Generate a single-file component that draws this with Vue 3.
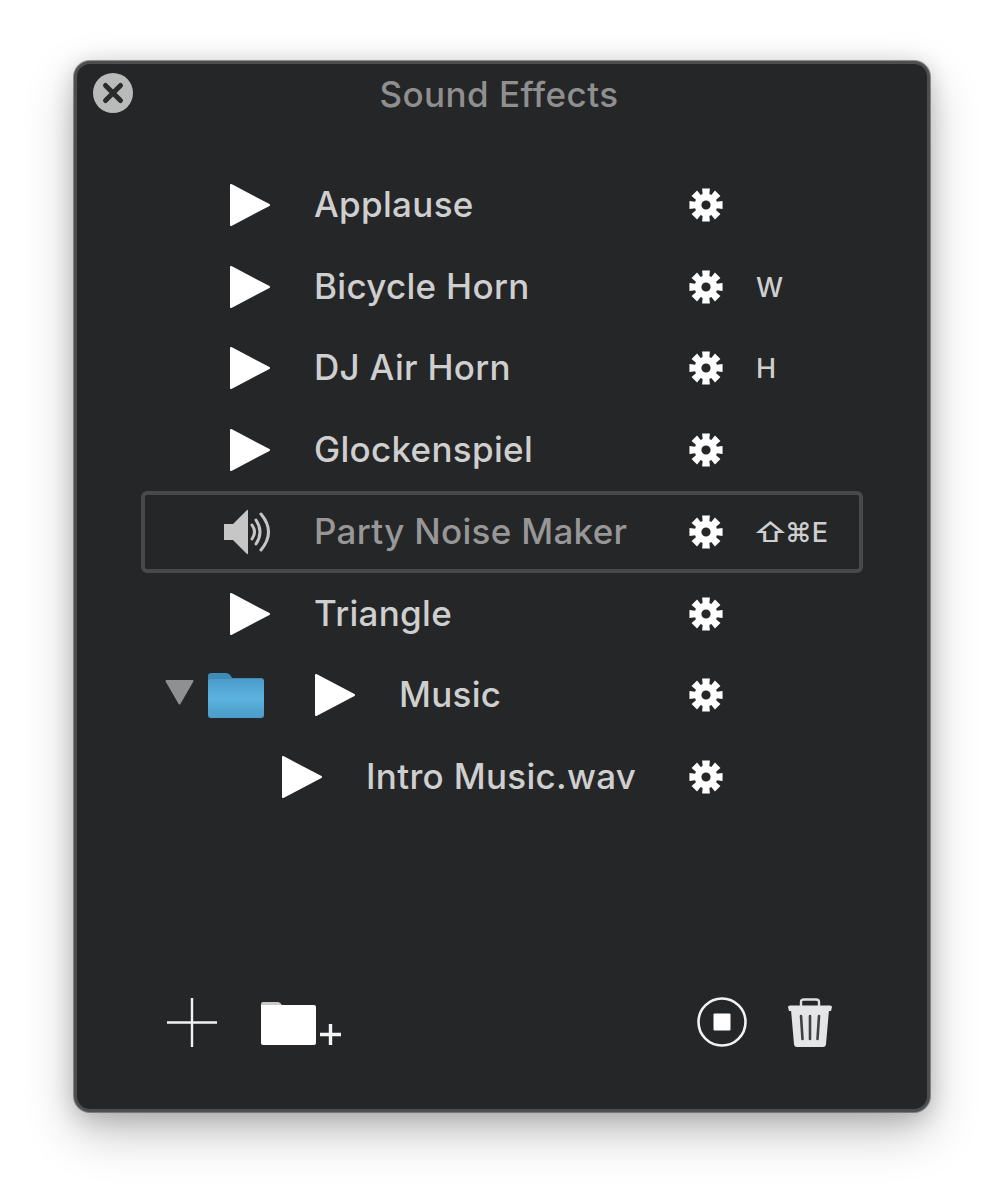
<script setup>
const rows = [
  { name: 'Applause', indent: 89 },
  { name: 'Bicycle Horn', indent: 89, key: 'W' },
  { name: 'DJ Air Horn', indent: 89, key: 'H' },
  { name: 'Glockenspiel', indent: 89 },
  { name: 'Party Noise Maker', indent: 83, mod: '⇧', key: '⌘E', playing: true },
  { name: 'Triangle', indent: 89 },
  { name: 'Music', indent: 24, folder: true },
  { name: 'Intro Music.wav', indent: 141 }
]

function gearPath() {
  const cx = 17
  const cy = 17
  const pt = (r, a) => {
    const x = cx + r * Math.cos(a)
    const y = cy + r * Math.sin(a)
    return `${x.toFixed(2)} ${y.toFixed(2)}`
  }
  const step = Math.PI / 4
  let d = ''
  for (let i = 0; i < 8; i++) {
    const a = i * step - Math.PI / 2
    d += `${i === 0 ? 'M' : 'L'}${pt(11.4, a - 0.3)} L${pt(17, a - 0.23)} L${pt(17, a + 0.23)} L${pt(11.4, a + 0.3)} `
  }
  d += 'Z M17 12.4 A4.6 4.6 0 1 0 17 21.6 A4.6 4.6 0 1 0 17 12.4 Z'
  return d
}
const gear = gearPath()
</script>

<template>
  <div class="page">
    <div class="window">
      <header class="head">
        <svg class="close" width="40" height="40" viewBox="0 0 40 40">
          <circle cx="20" cy="20" r="20" fill="#b9baba" />
          <path d="M12.5 12.5 L27.5 27.5 M27.5 12.5 L12.5 27.5" stroke="#2a2b2d" stroke-width="5" stroke-linecap="round" />
        </svg>
        <h1 class="title">Sound Effects</h1>
      </header>

      <ul class="list">
        <li v-for="row in rows" :key="row.name" class="row" :class="{ selected: row.playing }">
          <div class="main" :style="{ paddingLeft: row.indent + 'px' }">
            <template v-if="row.folder">
              <svg class="disc" width="29" height="25" viewBox="0 0 29 25">
                <path d="M1.5 1 H27.5 L14.5 23.5 Z" fill="#8f9091" stroke="#8f9091" stroke-width="2" stroke-linejoin="round" />
              </svg>
              <svg class="folder" width="56" height="45" viewBox="0 0 56 45">
                <defs>
                  <linearGradient id="folderFill" x1="0" y1="0" x2="0" y2="1">
                    <stop offset="0" stop-color="#4a9ccb" />
                    <stop offset="0.5" stop-color="#5cb2de" />
                    <stop offset="1" stop-color="#4a9cc9" />
                  </linearGradient>
                </defs>
                <path d="M0 3 Q0 0 3 0 H18 Q21 0 23 3 L24 5 H53 Q56 5 56 8 V14 H0 Z" fill="#3f8bb6" />
                <rect x="0" y="6" width="56" height="39" rx="3" fill="url(#folderFill)" />
              </svg>
            </template>
            <svg v-if="row.playing" class="speaker" width="47" height="46" viewBox="0 0 47 46">
              <path d="M0 15 H9 L23 1 Q24 0 24 2 V44 Q24 46 23 45 L9 31 H0 Z" fill="#c6c6c6" />
              <g fill="none" stroke="#c6c6c6" stroke-width="3" stroke-linecap="round">
                <path d="M28 16 Q33 23 28 30" />
                <path d="M32 11 Q40 23 32 35" />
                <path d="M37 5 Q52 23 37 41" />
              </g>
            </svg>
            <svg v-else class="play" width="40" height="42" viewBox="0 0 40 42">
              <path d="M1 1 L39 21 L1 41 Z" fill="#ffffff" stroke="#ffffff" stroke-width="2" stroke-linejoin="round" />
            </svg>
            <span class="name">{{ row.name }}</span>
          </div>
          <svg class="gear" width="34" height="34" viewBox="0 0 34 34">
            <path :d="gear" fill="#ffffff" fill-rule="evenodd" />
          </svg>
          <span v-if="row.key" class="shortcut"><span v-if="row.mod" class="mod">{{ row.mod }}</span>{{ row.key }}</span>
        </li>
      </ul>

      <footer class="foot">
        <div class="foot-group left">
          <svg width="50" height="49" viewBox="0 0 50 49">
            <path d="M25 0 V49 M0 24.5 H50" stroke="#f2f2f2" stroke-width="2.4" />
          </svg>
          <svg width="81" height="44" viewBox="0 0 81 44">
            <path d="M0 3 Q0 1 2 1 H17 Q19 1 21 4 H0 Z" fill="#c9c9c9" />
            <path d="M0 4 H21 L23 4 H53 Q55 4 55 6 V42 Q55 44 53 44 H2 Q0 44 0 42 Z" fill="#ffffff" />
            <path d="M69.5 23 V44 M59 33.5 H80" stroke="#f5f5f5" stroke-width="3.4" />
          </svg>
        </div>
        <div class="foot-group right">
          <svg width="50" height="50" viewBox="0 0 50 50">
            <circle cx="25" cy="25" r="23.5" fill="none" stroke="#f2f2f2" stroke-width="2.6" />
            <rect x="16.5" y="16.5" width="17" height="17" rx="1" fill="#ffffff" />
          </svg>
          <svg width="46" height="49" viewBox="0 0 46 49">
            <path d="M14 8 V4 Q14 1.5 17 1.5 H29 Q32 1.5 32 4 V8" fill="none" stroke="#dedfe0" stroke-width="2.4" />
            <path d="M1 9 Q1 7.5 3 7.5 H43 Q45 7.5 45 9 L44 13 H2 Z" fill="#e4e5e6" />
            <path d="M4 12 H42 L39 46 Q38.8 49 36 49 H10 Q7.2 49 7 46 Z" fill="#e4e5e6" />
            <path d="M14 18 L15.5 41 M23 18 V41 M32 18 L30.5 41" stroke="#3f4042" stroke-width="2.6" stroke-linecap="round" />
          </svg>
        </div>
      </footer>
    </div>
  </div>
</template>

<style scoped>
.page {
  box-sizing: border-box;
  height: 1200px;
  padding: 61px 0 88px 74px;
  overflow: hidden;
}
.window {
  box-sizing: border-box;
  width: 856px;
  height: 1051px;
  border: 3px solid #4d4e50;
  border-radius: 16px;
  background: #252628;
  box-shadow: 0 0 0 1px rgba(40, 40, 40, 0.45), 0 20px 50px rgba(0, 0, 0, 0.24), 0 10px 24px rgba(0, 0, 0, 0.1), 0 0 22px rgba(0, 0, 0, 0.1);
  display: flex;
  flex-direction: column;
  font-family: Inter, "Liberation Sans", sans-serif;
}
.head {
  height: 100px;
  flex: none;
  position: relative;
}
.close {
  position: absolute;
  left: 16px;
  top: 9px;
  display: block;
}
.title {
  margin: 0;
  padding: 10px 6px 0 0;
  text-align: center;
  font-size: 35px;
  line-height: 40px;
  letter-spacing: 0.45px;
  font-weight: 500;
  color: #8f8f8f;
}
.list {
  list-style: none;
  margin: 0 64px;
  padding: 0;
  flex: none;
}
.row {
  box-sizing: border-box;
  height: 81.75px;
  width: 722px;
  display: flex;
  align-items: center;
  border: 4px solid transparent;
  border-radius: 6px;
}
.row.selected {
  border-color: #48494b;
}
.main {
  box-sizing: border-box;
  width: 544px;
  display: flex;
  align-items: center;
  flex: none;
  margin-left: -4px;
}
.disc {
  margin-right: 14px;
  margin-top: -6px;
  flex: none;
}
.folder {
  margin-right: 51px;
  flex: none;
}
.play {
  flex: none;
  margin-right: 44px;
}
.speaker {
  flex: none;
  margin-right: 43px;
}
.name {
  font-size: 35px;
  line-height: 40px;
  letter-spacing: 0.3px;
  font-weight: 500;
  color: #cfcfcf;
  white-space: nowrap;
  margin-top: -2px;
}
.selected .name {
  color: #979797;
}
.gear {
  flex: none;
  margin-left: 4px;
}
.shortcut {
  margin-left: 33px;
  margin-top: 2px;
  font-size: 27px;
  line-height: 34px;
  font-weight: 500;
  color: #cfcfcf;
  white-space: nowrap;
}
.mod {
  display: inline-block;
  width: 29px;
  transform: scaleX(1.22);
  transform-origin: 0 50%;
  margin-left: -3px;
  margin-right: 3px;
}
.foot {
  margin-top: auto;
  padding: 0 94px 62px 90px;
  display: flex;
  justify-content: space-between;
  align-items: flex-end;
}
.foot-group {
  display: flex;
  align-items: center;
}
.left {
  gap: 44px;
}
.right {
  gap: 40px;
}
svg {
  display: block;
}
</style>

<style>
html,
body {
  background: #ffffff;
}
</style>
